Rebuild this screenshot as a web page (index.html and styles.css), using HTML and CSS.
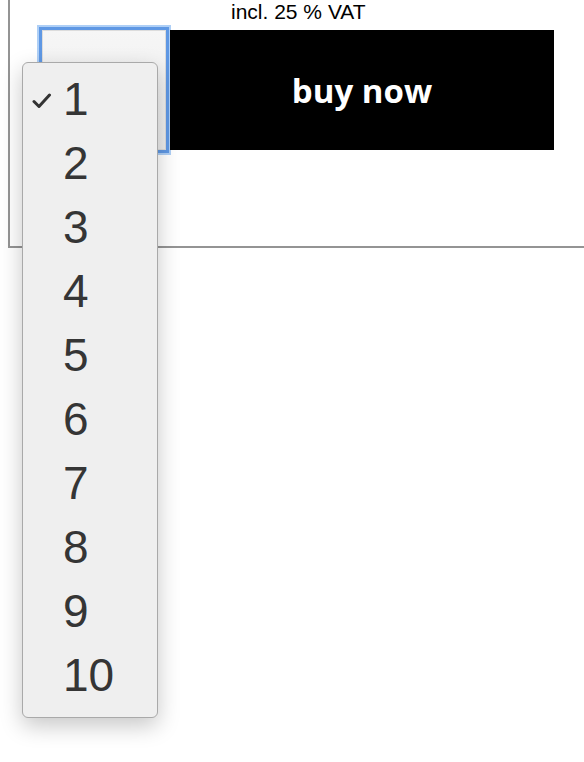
FILE: index.html
```html
<!DOCTYPE html>
<html lang="en">
<head>
    <meta charset="UTF-8">
    <meta name="viewport" content="width=device-width, initial-scale=1.0">
    <title>Buy</title>
    <link rel="stylesheet" href="styles.css">
</head>
<body>
    <div class="product">
        <div class="vat">incl. 25 % VAT</div>
        <div class="buy-row">
            <div class="qty"></div>
            <button type="button" class="buy">buy now</button>
        </div>
    </div>

    <ul class="qty-menu">
        <li class="selected">
            <svg class="check" width="20" height="16" viewBox="0 0 20 16">
                <polyline points="2,8.5 7,13.5 17.5,2" fill="none" stroke="#333" stroke-width="3" stroke-linecap="round" stroke-linejoin="round"/>
            </svg>1
        </li>
        <li>2</li>
        <li>3</li>
        <li>4</li>
        <li>5</li>
        <li>6</li>
        <li>7</li>
        <li>8</li>
        <li>9</li>
        <li>10</li>
    </ul>
</body>
</html>
```

FILE: styles.css
```css
body {
    margin: 0;
    background-color: #ffffff;
    font-family: "Liberation Sans", Arial, sans-serif;
    overflow: hidden;
}
.product {
    margin-left: 8px;
    padding: 0 0 96px 32px;
    border-left: 2px solid #949494;
    border-bottom: 2px solid #949494;
}
.vat {
    margin-left: 189px;
    font-size: 21px;
    line-height: 24px;
    margin-bottom: 6px;
    color: #000000;
}
.buy-row {
    display: flex;
    height: 120px;
}
.qty {
    width: 124px;
    height: 120px;
    box-sizing: border-box;
    border: 1px solid #dcdcdc;
    background: linear-gradient(#f6f6f6, #ececec);
    box-shadow: 0 0 0 3px #5f98e4, 0 0 0 5px #aecff6;
}
.buy {
    width: 384px;
    height: 120px;
    margin-left: 4px;
    border: none;
    background-color: #000000;
    color: #ffffff;
    font-family: "Open Sans", sans-serif;
    font-weight: bold;
    font-size: 33px;
    padding: 0;
}
.qty-menu {
    position: absolute;
    left: 22px;
    top: 62px;
    width: 136px;
    box-sizing: border-box;
    margin: 0;
    padding: 4px 0 10px 0;
    list-style: none;
    background-color: #efefef;
    border: 1px solid #a9a9a9;
    border-radius: 6px;
    box-shadow: 0 8px 22px rgba(0, 0, 0, 0.22);
}
.qty-menu li {
    position: relative;
    height: 64px;
    line-height: 64px;
    padding-left: 40px;
    font-size: 46px;
    color: #353535;
}
.check {
    position: absolute;
    left: 9px;
    top: 26px;
}
```
